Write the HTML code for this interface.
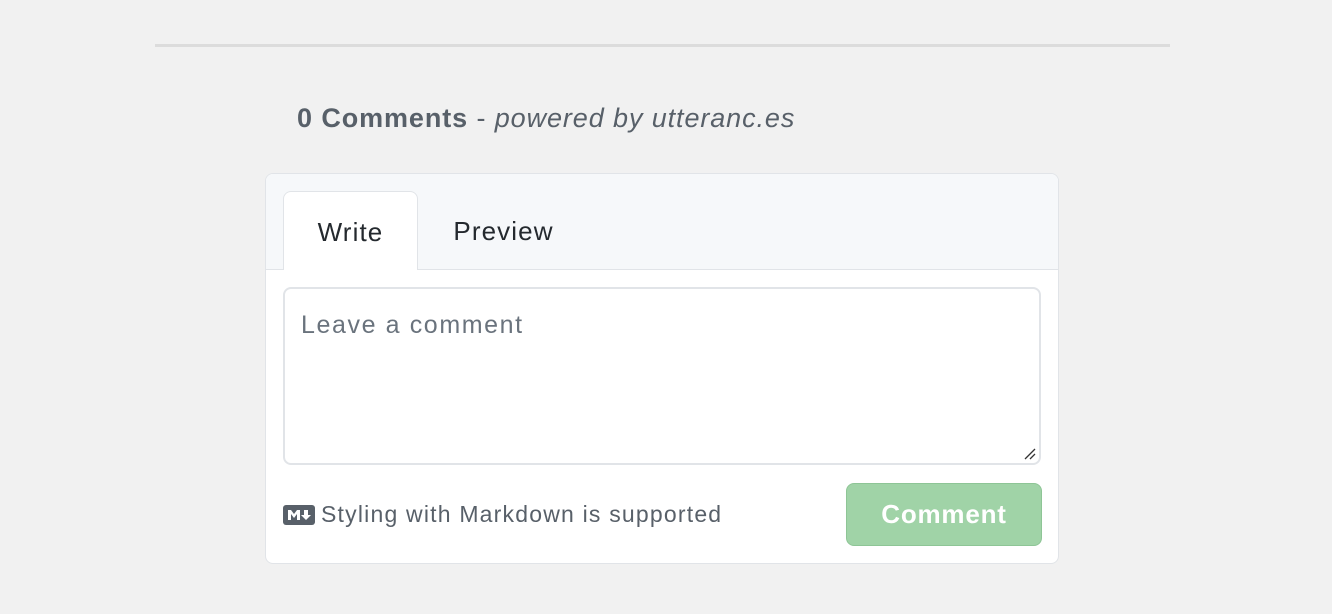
<!DOCTYPE html>
<html><head><style>
body{margin:0;width:1332px;height:614px;background:#f1f1f1;font-family:"Liberation Sans",sans-serif;position:relative;overflow:hidden}
.hr{position:absolute;left:155px;top:44px;width:1015px;height:3px;background:#dcdcdc}
.hdr{position:absolute;left:297px;top:103px;font-size:27px;color:#586069;letter-spacing:0.9px;white-space:nowrap}
.box{position:absolute;left:265px;top:173px;width:792px;height:389px;background:#fff;border:1px solid #e1e4e8;border-radius:8px;overflow:hidden}
.tabs{height:95px;background:#f6f8fa;border-bottom:1px solid #e1e4e8;position:relative}
.tab{position:absolute;top:17px;height:79px;font-size:26px;color:#24292e;line-height:80px;text-align:center;letter-spacing:1.1px}
.w{left:17px;width:135px;background:#fff;border:1px solid #e1e4e8;border-bottom:none;border-radius:8px 8px 0 0;box-sizing:border-box}
.p{left:170px;width:135px}
.ta{position:absolute;left:17px;top:113px;width:758px;height:178px;border:2px solid #e1e4e8;border-radius:8px;box-sizing:border-box;font-size:25px;color:#6a737d;padding:22px 16px;letter-spacing:1.6px}
.md{position:absolute;left:17px;top:327px;font-size:23px;color:#586069;display:flex;align-items:center;gap:6px;letter-spacing:1.2px;white-space:nowrap}
.btn{position:absolute;left:580px;top:309px;width:196px;height:63px;background:#a0d3a7;border:1px solid #8ec596;border-radius:8px;box-sizing:border-box;color:#fff;font-size:26px;font-weight:bold;text-align:center;line-height:60px;letter-spacing:0.8px}
</style></head><body>
<div class="hr"></div>
<div class="hdr"><b>0 Comments</b> - <i>powered by utteranc.es</i></div>
<div class="box">
<div class="tabs"><div class="tab w">Write</div><div class="tab p">Preview</div></div>
<div class="ta">Leave a comment
<svg style="position:absolute;right:3px;bottom:3px" width="12" height="12"><path d="M1 11L11 1M6 11L11 6" stroke="#333" stroke-width="1.3"/></svg></div>
<div class="md"><svg width="32" height="20" viewBox="0 0 32 20"><rect width="32" height="20" rx="3" fill="#586069"/><path d="M5 15V5h3l3 4 3-4h3v10h-3V9l-3 4-3-4v6z M21 5h4v5h3l-5 5-5-5h3z" fill="#fff"/></svg>Styling with Markdown is supported</div>
<div class="btn">Comment</div>
</div>
</body></html>
